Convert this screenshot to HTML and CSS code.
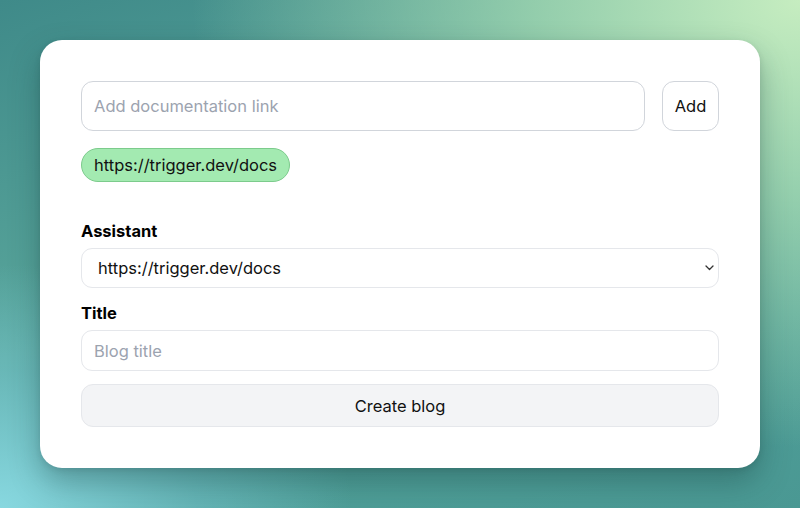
FILE: index.html
```html
<!DOCTYPE html>
<html lang="en">
<head>
<meta charset="utf-8">
<title>Create blog</title>
<link rel="stylesheet" href="styles.css">
</head>
<body>
  <main class="card">
    <form class="link-row">
      <input class="link-input" type="text" placeholder="Add documentation link">
      <button class="add-btn" type="button">Add</button>
    </form>
    <div class="chips">
      <span class="chip">https://trigger.dev/docs</span>
    </div>
    <div class="field field-first">
      <label class="field-label">Assistant</label>
      <div class="select-wrap">
        <select class="select">
          <option>https://trigger.dev/docs</option>
        </select>
        <svg class="chevron" width="9" height="6" viewBox="0 0 9 6" aria-hidden="true">
          <path d="M1 1 L4.5 4.5 L8 1" fill="none" stroke="#333" stroke-width="1.3" stroke-linecap="round" stroke-linejoin="round"/>
        </svg>
      </div>
    </div>
    <div class="field">
      <label class="field-label">Title</label>
      <input class="title-input" type="text" placeholder="Blog title">
    </div>
    <button class="create-btn" type="button">Create blog</button>
  </main>
</body>
</html>
```

FILE: styles.css
```css
* {
  box-sizing: border-box;
}

html, body {
  margin: 0;
  height: 508px;
}

body {
  font-family: Inter, "Liberation Sans", sans-serif;
  color: #111;
  padding: 40px;
  background:
    radial-gradient(ellipse 95% 110% at 100% 0%, #c6edc0 0%, rgba(170, 222, 180, 0.75) 35%, rgba(140, 205, 175, 0) 80%),
    radial-gradient(ellipse 55% 60% at 0% 100%, #88d8e0 0%, rgba(120, 200, 210, 0.5) 45%, rgba(100, 180, 190, 0) 80%),
    linear-gradient(160deg, #3f8a89 0%, #5aa79c 45%, #4f9f98 75%, #4a9893 100%);
}

.card {
  width: 720px;
  height: 428px;
  background: #fff;
  border-radius: 22px;
  padding: 41px;
  box-shadow: 0 14px 30px rgba(20, 60, 60, 0.35), 0 2px 6px rgba(0, 0, 0, 0.1);
  display: flex;
  flex-direction: column;
}

.link-row {
  display: flex;
  gap: 17px;
  margin: 0;
}

.link-input {
  flex: 1;
  height: 50px;
  border: 1px solid #d1d5db;
  border-radius: 12px;
  padding: 0 12px;
  font: 16.5px Inter, "Liberation Sans", sans-serif;
  color: #111;
  outline: none;
}

.link-input::placeholder,
.title-input::placeholder {
  color: #9ca3af;
}

.add-btn {
  width: 57px;
  height: 50px;
  border: 1px solid #d1d5db;
  border-radius: 12px;
  background: #fff;
  font: 16.5px Inter, "Liberation Sans", sans-serif;
  color: #111;
  padding: 0;
}

.chips {
  display: flex;
  margin-top: 17px;
}

.chip {
  height: 34px;
  line-height: 32px;
  padding: 0 12px;
  border-radius: 17px;
  background: #a3eab1;
  border: 1px solid #7ccb8c;
  font-size: 16.5px;
  color: #111;
}

.field {
  display: flex;
  flex-direction: column;
  gap: 7px;
  margin-top: 16px;
}

.field-first {
  margin-top: 40px;
}

.field-label {
  font-size: 16.5px;
  font-weight: 700;
  line-height: 19px;
  color: #000;
}

.select-wrap {
  position: relative;
}

.select {
  appearance: none;
  -webkit-appearance: none;
  width: 100%;
  height: 40px;
  border: 1px solid #e5e7eb;
  border-radius: 11px;
  background: #fff;
  padding: 0 16px;
  font: 16.5px Inter, "Liberation Sans", sans-serif;
  color: #111;
  outline: none;
}

.chevron {
  position: absolute;
  right: 5px;
  top: 17px;
  pointer-events: none;
}

.title-input {
  width: 100%;
  height: 41px;
  border: 1px solid #e5e7eb;
  border-radius: 11px;
  padding: 0 12px;
  font: 16.5px Inter, "Liberation Sans", sans-serif;
  color: #111;
  outline: none;
}

.create-btn {
  margin-top: 13px;
  width: 100%;
  height: 43px;
  border: 1px solid #e5e7eb;
  border-radius: 12px;
  background: #f3f4f6;
  font: 16.5px Inter, "Liberation Sans", sans-serif;
  color: #111;
}
```
